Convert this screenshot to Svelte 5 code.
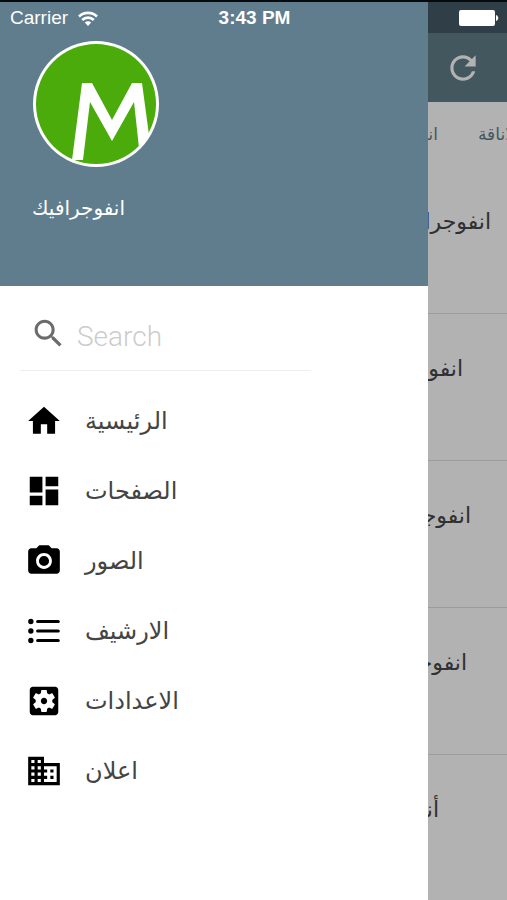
<script lang="ts">
    interface MenuItem {
        label: string;
        icon: string;
    }

    interface Post {
        title: string;
        inset: number;
    }

    const menu: MenuItem[] = [
        { label: "الرئيسية", icon: "M10 20v-6h4v6h5v-8h3L12 3 2 12h3v8z" },
        {
            label: "الصفحات",
            icon: "M3 13h8V3H3v10zm0 8h8v-6H3v6zm10 0h8V11h-8v10zm0-18v6h8V3h-8z",
        },
        {
            label: "الصور",
            icon: "M12 8.8a3.2 3.2 0 1 0 0 6.4 3.2 3.2 0 0 0 0-6.4zM9 2L7.17 4H4c-1.1 0-2 .9-2 2v12c0 1.1.9 2 2 2h16c1.1 0 2-.9 2-2V6c0-1.1-.9-2-2-2h-3.17L15 2H9zm3 15c-2.76 0-5-2.24-5-5s2.24-5 5-5 5 2.24 5 5-2.24 5-5 5z",
        },
        {
            label: "الارشيف",
            icon: "M3.7 10.3a1.7 1.7 0 1 0 0 3.4 1.7 1.7 0 0 0 0-3.4zm0-6a1.7 1.7 0 1 0 0 3.4 1.7 1.7 0 0 0 0-3.4zm0 12a1.7 1.7 0 1 0 0 3.4 1.7 1.7 0 0 0 0-3.4zM8 19h13a1 1 0 0 0 0-2H8a1 1 0 0 0 0 2zm0-6h13a1 1 0 0 0 0-2H8a1 1 0 0 0 0 2zm0-8a1 1 0 0 0 0 2h13a1 1 0 0 0 0-2H8z",
        },
        {
            label: "الاعدادات",
            icon: "M12 10c-1.1 0-2 .9-2 2s.9 2 2 2 2-.9 2-2-.9-2-2-2zm7-7H5c-1.11 0-2 .9-2 2v14c0 1.1.89 2 2 2h14c1.11 0 2-.9 2-2V5c0-1.1-.89-2-2-2zm-1.75 9c0 .23-.02.46-.05.68l1.48 1.16c.13.11.17.3.08.45l-1.4 2.42c-.09.15-.27.21-.43.15l-1.74-.7c-.36.28-.76.51-1.18.69l-.26 1.85c-.03.17-.18.3-.35.3h-2.8c-.17 0-.32-.13-.35-.29l-.26-1.85c-.43-.18-.82-.41-1.18-.69l-1.74.7c-.16.06-.34 0-.43-.15l-1.4-2.42c-.09-.15-.05-.34.08-.45l1.48-1.16c-.03-.23-.05-.46-.05-.69 0-.23.02-.46.05-.68l-1.48-1.16c-.13-.11-.17-.3-.08-.45l1.4-2.42c.09-.15.27-.21.43-.15l1.74.7c.36-.28.76-.51 1.18-.69l.26-1.85c.03-.17.18-.3.35-.3h2.8c.17 0 .32.13.35.29l.26 1.85c.43.18.82.41 1.18.69l1.74-.7c.16-.06.34 0 .43.15l1.4 2.42c.09.15.05.34-.08.45l-1.48 1.16c.03.23.05.46.05.69z",
        },
        {
            label: "اعلان",
            icon: "M12 7V3H2v18h20V7H12zM6 19H4v-2h2v2zm0-4H4v-2h2v2zm0-4H4V9h2v2zm0-4H4V5h2v2zm4 12H8v-2h2v2zm0-4H8v-2h2v2zm0-4H8V9h2v2zm0-4H8V5h2v2zm10 12h-8v-2h2v-2h-2v-2h2v-2h-2V9h8v10zm-2-8h-2v2h2v-2zm0 4h-2v2h2v-2z",
        },
    ];

    // inset: where the title starts, from the right edge of the row
    const posts: Post[] = [
        { title: "انفوجرافيك", inset: 16 },
        { title: "انفوجرافيك", inset: 44 },
        { title: "انفوجرافيك", inset: 36 },
        { title: "انفوجرافيك", inset: 40 },
        { title: "أنفوجرافيك", inset: 68 },
    ];

    let query = $state("");
</script>

<div class="screen">
    <aside class="drawer">
        <header class="profile">
            <svg class="avatar" viewBox="0 0 128 128" aria-hidden="true">
                <circle cx="64" cy="64" r="63" fill="#fff" />
                <circle cx="64" cy="64" r="60" fill="#4aab0b" />
                <path
                    fill="#fff"
                    d="M50 43H60L80 80L100 43H110L117 95L113 102L107 108L102 62L80 101L58 62L51 120H40Z"
                />
            </svg>
            <p class="name" dir="rtl">انفوجرافيك</p>
        </header>

        <label class="search">
            <svg viewBox="0 0 24 24" aria-hidden="true">
                <path d="M15.5 14h-.79l-.28-.27C15.41 12.59 16 11.11 16 9.5 16 5.91 13.09 3 9.5 3S3 5.91 3 9.5 5.91 16 9.5 16c1.61 0 3.09-.59 4.23-1.57l.27.28v.79l5 4.99L20.49 19l-4.99-5zm-6 0C7.01 14 5 11.99 5 9.5S7.01 5 9.5 5 14 7.01 14 9.5 11.99 14 9.5 14z" />
            </svg>
            <input type="search" placeholder="Search" aria-label="Search" bind:value={query} />
        </label>

        <nav class="menu">
            {#each menu as item (item.label)}
                <a href="#menu" class="menu-item">
                    <svg viewBox="0 0 24 24" aria-hidden="true"><path d={item.icon} /></svg>
                    <span dir="rtl">{item.label}</span>
                </a>
            {/each}
        </nav>
    </aside>

    <main class="page">
        <div class="toolbar">
            <button type="button" class="refresh" aria-label="Refresh">
                <svg viewBox="0 0 24 24" aria-hidden="true">
                    <path d="M17.65 6.35C16.2 4.9 14.21 4 12 4c-4.42 0-7.99 3.58-7.99 8s3.57 8 7.99 8c3.73 0 6.84-2.55 7.73-6h-2.08c-.82 2.33-3.04 4-5.65 4-3.31 0-6-2.69-6-6s2.69-6 6-6c1.66 0 3.14.69 4.22 1.78L13 11h7V4l-2.35 2.35z" />
                </svg>
            </button>
        </div>
        <div class="tabs">
            <a href="#first" class="tab first" dir="rtl">انفوجرافيك</a>
            <a href="#second" class="tab" dir="rtl">الاناقة</a>
        </div>
        <ul class="posts">
            {#each posts as post}
                <li dir="rtl" style:padding-right="{post.inset}px">{post.title}</li>
            {/each}
        </ul>
    </main>

    <div class="status">
        <span class="carrier">
            Carrier
            <svg class="wifi" viewBox="0 0 20 15" aria-hidden="true">
                <path d="M1 5.5a13 13 0 0 1 18 0M4.2 9a8.300 8.300 0 0 1 11.600 0" />
                <path class="dot" d="M10 15l-3.200-3.500a4.600 4.600 0 0 1 6.400 0z" />
            </svg>
        </span>
        <strong>3:43 PM</strong>
        <svg class="battery" viewBox="0 0 40 16" aria-hidden="true">
            <rect x="0" y="0" width="36" height="16" rx="2" />
            <path d="M37 5c3 1 3 5 0 6z" />
        </svg>
    </div>
</div>

<style>
    :global(body) {
        margin: 0;
    }

    .screen {
        position: relative;
        display: flex;
        min-height: 100vh;
        box-sizing: border-box;
        overflow: hidden;
        border-top: 2px solid #060a0c;
        border-bottom: 1px solid #333;
        font-family: "DejaVu Sans", sans-serif;
        background: #fff;
    }

    .drawer {
        flex: 1;
        min-width: 0;
    }

    .profile {
        box-sizing: border-box;
        height: 284px;
        padding: 38px 32px 0;
        background: #607d8e;
        color: #fff;
    }

    .avatar {
        display: block;
        width: 128px;
        height: 128px;
    }

    .name {
        width: max-content;
        margin: 24px 0 0;
        font-size: 20px;
        line-height: 32px;
    }

    .search {
        display: flex;
        align-items: center;
        gap: 10px;
        width: 68%;
        height: 85px;
        box-sizing: border-box;
        margin-left: 20px;
        padding: 10px 0 0 10px;
        border-bottom: 1px solid #eee;
    }

    .search svg {
        flex: none;
        width: 37px;
        height: 37px;
        fill: #6b6b6b;
    }

    .search input {
        flex: 1;
        min-width: 0;
        padding: 6px 0 0;
        border: 0;
        outline: none;
        background: none;
        color: #444;
        font: 300 28px Roboto, sans-serif;
    }

    .search input::placeholder {
        color: #ccc;
        opacity: 1;
    }

    .menu {
        display: flex;
        flex-direction: column;
        padding: 15px 0 0 25px;
    }

    .menu-item {
        display: flex;
        align-items: center;
        gap: 22px;
        height: 70px;
        color: #444;
        font-size: 24px;
        text-decoration: none;
    }

    .menu-item svg {
        width: 38px;
        height: 38px;
        fill: #000;
    }

    .page {
        flex: none;
        width: 79px;
        overflow: hidden;
        background: #b2b2b2;
    }

    .toolbar {
        display: flex;
        box-sizing: border-box;
        height: 100px;
        padding-top: 31px;
        background: linear-gradient(#303f47 31px, #43575f 31px);
    }

    .refresh {
        display: flex;
        align-self: center;
        padding: 0 0 0 16px;
        border: 0;
        background: none;
    }

    .refresh svg {
        width: 38px;
        height: 38px;
        fill: #b2b2b2;
    }

    .tabs {
        display: flex;
        gap: 40px;
        height: 65px;
        overflow: hidden;
    }

    .tab {
        flex: none;
        color: #43575f;
        font-size: 17px;
        line-height: 64px;
        text-decoration: none;
        white-space: nowrap;
    }

    .tab.first {
        width: 10px;
        overflow: hidden;
    }

    .posts {
        margin: 0;
        padding: 0;
        list-style: none;
    }

    .posts li {
        box-sizing: border-box;
        height: 147px;
        padding-top: 39px;
        overflow: hidden;
        border-bottom: 1px solid #9c9c9c;
        color: #303030;
        font-size: 22px;
        line-height: 32px;
        white-space: nowrap;
    }

    .posts li:last-child {
        border-bottom: 0;
    }

    .status {
        position: absolute;
        top: 0;
        left: 0;
        right: 0;
        display: grid;
        grid-template-columns: 1fr auto 1fr;
        align-items: center;
        height: 32px;
        padding: 0 8px 0 10px;
        color: #fff;
        font-family: "Liberation Sans", sans-serif;
        font-size: 19px;
    }

    .carrier {
        display: flex;
        align-items: center;
        gap: 10px;
    }

    .wifi {
        width: 20px;
        height: 15px;
        fill: none;
        stroke: #fff;
        stroke-width: 2.6;
    }

    .wifi .dot {
        fill: #fff;
        stroke: none;
    }

    .battery {
        justify-self: end;
        width: 40px;
        height: 16px;
        fill: #fff;
    }
</style>
